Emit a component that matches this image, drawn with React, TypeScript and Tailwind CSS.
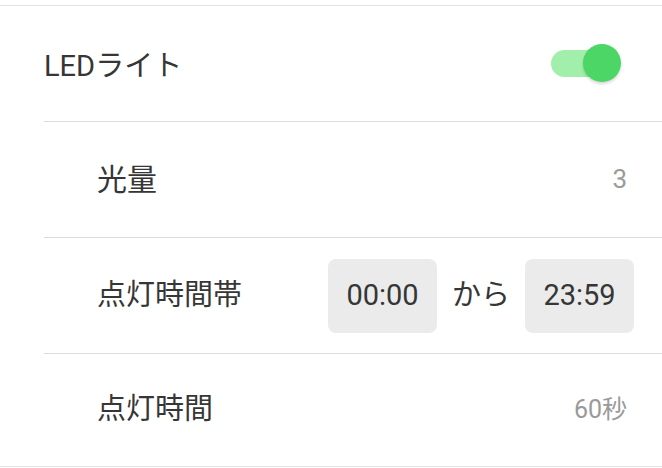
import React, { useState } from "react";

const font = { fontFamily: "Roboto, 'Noto Sans CJK JP', sans-serif" };

function Toggle({ on, onChange }: { on: boolean; onChange: () => void }) {
  return (
    <button onClick={onChange} className="relative w-[70px] h-[40px] flex items-center cursor-pointer">
      <span className={`w-[52px] h-[27px] rounded-full ${on ? "bg-[#a2eeab]" : "bg-[#d6d6d6]"}`} />
      <span
        className={`absolute top-0 w-[38px] h-[38px] rounded-full shadow-[0_2px_3px_rgba(0,0,0,0.16)] ${
          on ? "right-0 bg-[#4cd665]" : "left-0 bg-[#f4f4f4]"
        }`}
      />
    </button>
  );
}

function TimeBox({ value }: { value: string }) {
  return (
    <div className="w-[109px] h-[74px] rounded-[8px] bg-[#ebebeb] flex items-center justify-center text-[29px] text-[#363636]">
      {value}
    </div>
  );
}

export default function App() {
  const [ledOn, setLedOn] = useState(true);

  return (
    <div className="w-full bg-white pt-[5px]" style={font}>
      <div className="border-t border-b border-[#e2e2e2]">
        {/* main toggle row */}
        <div className="h-[115px] flex items-center justify-between pl-[44px] pr-[41px]">
          <span className="mt-[6px] text-[29px] text-[#363636]">LEDライト</span>
          <Toggle on={ledOn} onChange={() => setLedOn((v) => !v)} />
        </div>

        {/* sub settings */}
        <div className="ml-[44px]">
          <div className="h-[116px] border-t border-[#dcdcdc] flex items-center justify-between pl-[53px] pr-[35px]">
            <span className="text-[30px] text-[#363636]">光量</span>
            <span className="text-[26px] text-[#9a9a9a]">3</span>
          </div>
          <div className="h-[116px] border-t border-[#dcdcdc] flex items-center justify-between pl-[53px] pr-[28px]">
            <span className="text-[29px] text-[#363636]">点灯時間帯</span>
            <div className="flex items-center">
              <TimeBox value="00:00" />
              <span className="mx-[15px] text-[29px] text-[#363636]">から</span>
              <TimeBox value="23:59" />
            </div>
          </div>
          <div className="h-[113px] border-t border-[#dcdcdc] flex items-center justify-between pl-[53px] pr-[35px]">
            <span className="text-[29px] text-[#363636]">点灯時間</span>
            <span className="text-[25px] text-[#9a9a9a]">60秒</span>
          </div>
        </div>
      </div>
    </div>
  );
}
